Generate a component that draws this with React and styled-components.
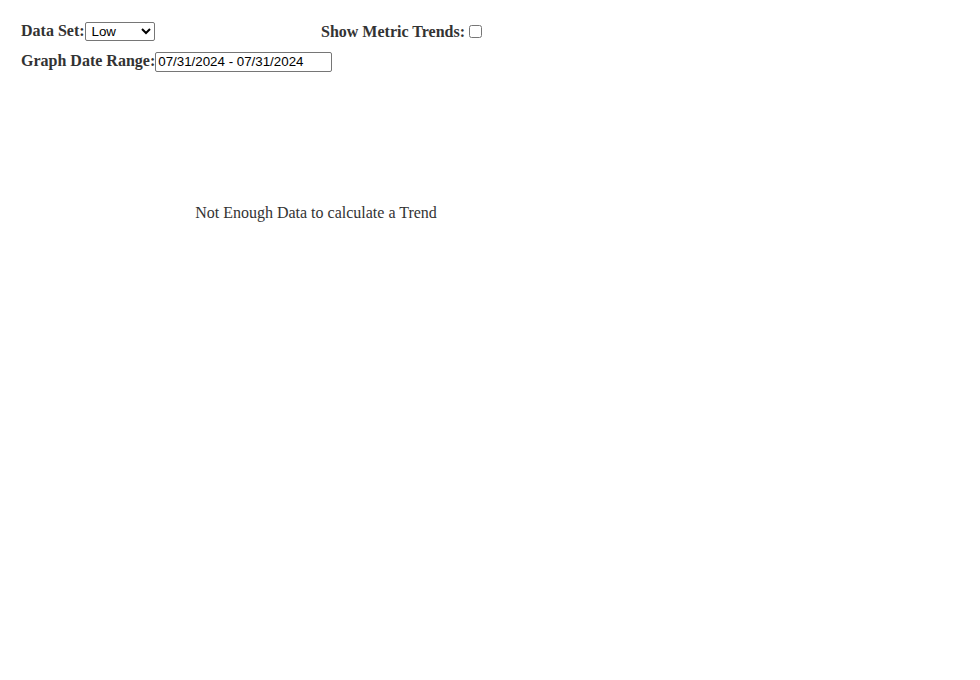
import React from 'react';
import styled, { createGlobalStyle } from 'styled-components';

const GlobalStyle = createGlobalStyle`
  body {
    margin: 0;
    background: #fff;
    font-family: "Liberation Serif", "Times New Roman", serif;
    color: #333;
  }
`;

const Page = styled.div`
  padding: 19px 21px;
`;

const Controls = styled.div`
  display: flex;
  flex-direction: column;
  gap: 7px;
`;

const Row = styled.div`
  display: flex;
  align-items: center;
`;

const Field = styled.div`
  display: flex;
  align-items: center;
  height: 22px;
  white-space: nowrap;
  width: ${(p) => (p.width ? `${p.width}px` : 'auto')};
  padding-top: ${(p) => p.offset || 0}px;
`;

const Label = styled.label`
  font-weight: bold;
  font-size: 16px;
  margin-right: ${(p) => p.gap || 0}px;
`;

const Select = styled.select`
  width: 70px;
  height: 19px;
  margin-top: 1px;
  font-family: "Liberation Sans", Arial, sans-serif;
  font-size: 13.333px;
  color: #000;
  border: 1px solid #767676;
  border-radius: 2px;
  background: #fff;
  padding: 0 2px;
`;

const Input = styled.input`
  width: 177px;
  height: 20px;
  margin-top: 1px;
  box-sizing: border-box;
  font-family: "Liberation Sans", Arial, sans-serif;
  font-size: 13.333px;
  color: #000;
  border: 1px solid #767676;
  border-radius: 2px;
  padding: 1px 2px;
`;

const Checkbox = styled.input`
  width: 13px;
  height: 13px;
  margin: 0 0 2px 0;
`;

const Chart = styled.div`
  width: 590px;
  padding-top: 132px;
  text-align: center;
  font-size: 16px;
`;

export default function App() {
  return (
    <Page>
      <GlobalStyle />
      <Controls>
        <Row>
          <Field width={300}>
            <Label>Data Set:</Label>
            <Select defaultValue="Low">
              <option>Low</option>
              <option>Medium</option>
              <option>High</option>
            </Select>
          </Field>
          <Field offset={2}>
            <Label gap={4}>Show Metric Trends:</Label>
            <Checkbox type="checkbox" />
          </Field>
        </Row>
        <Row>
          <Field>
            <Label>Graph Date Range:</Label>
            <Input type="text" defaultValue="07/31/2024 - 07/31/2024" />
          </Field>
        </Row>
      </Controls>
      <Chart>Not Enough Data to calculate a Trend</Chart>
    </Page>
  );
}
